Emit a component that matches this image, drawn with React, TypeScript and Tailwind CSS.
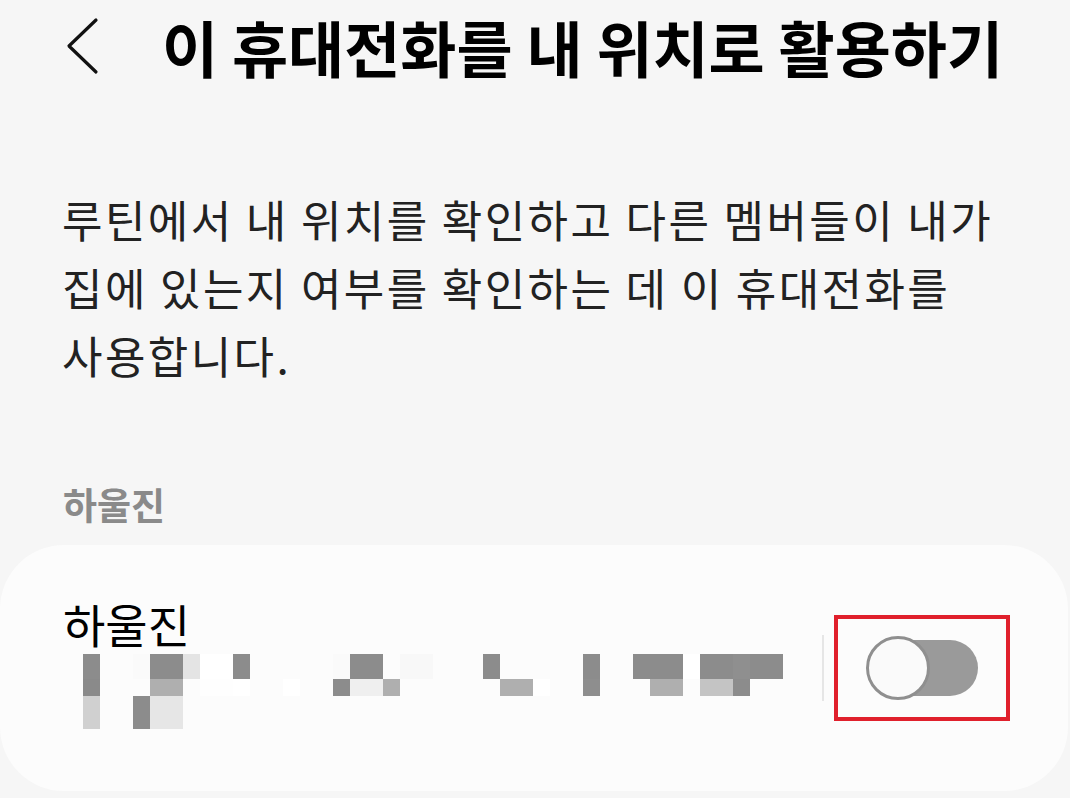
import React from "react";

const font = { fontFamily: '"Noto Sans CJK KR", "Noto Sans", sans-serif' };

type R = [number, number, string];
const row1: R[] = [
  [0, 17, "#8c8c8c"], [50, 17, "#fafafa"], [67, 33, "#8c8c8c"], [100, 17, "#e4e4e4"], [117, 33, "#ffffff"],
  [150, 17, "#8c8c8c"], [250, 17, "#fafafa"], [267, 33, "#8c8c8c"], [317, 33, "#f8f8f8"], [400, 17, "#8c8c8c"],
  [500, 17, "#8c8c8c"], [550, 50, "#8c8c8c"], [600, 17, "#ffffff"], [617, 33, "#8c8c8c"], [650, 17, "#8f8f8f"],
  [667, 33, "#8c8c8c"],
];
const row2: R[] = [
  [0, 17, "#8a8a8a"], [67, 33, "#afafaf"], [117, 33, "#fefefe"], [150, 17, "#ffffff"], [200, 17, "#ffffff"],
  [250, 17, "#8c8c8c"], [267, 33, "#efefef"], [300, 17, "#afafaf"], [417, 33, "#afafaf"], [450, 17, "#ffffff"],
  [500, 17, "#8e8e8e"], [567, 33, "#afafaf"], [617, 33, "#c4c4c4"], [650, 17, "#8c8c8c"],
];
const row3: R[] = [[0, 17, "#d0d0d0"], [50, 17, "#8c8c8c"], [67, 33, "#e6e6e6"]];

function Mosaic() {
  return (
    <svg width="700" height="75" viewBox="0 0 700 75" className="block">
      {row1.map(([x, w, c], i) => <rect key={"a" + i} x={x} y={0} width={w} height={25} fill={c} />)}
      {row2.map(([x, w, c], i) => <rect key={"b" + i} x={x} y={25} width={w} height={17} fill={c} />)}
      {row3.map(([x, w, c], i) => <rect key={"c" + i} x={x} y={42} width={w} height={33} fill={c} />)}
    </svg>
  );
}

export default function App() {
  return (
    <div className="w-[1070px] h-[798px] overflow-hidden bg-[#f6f6f6] text-black" style={font}>
      {/* header */}
      <div className="flex items-center h-[92px] pl-[66px]">
        <svg width="34" height="58" viewBox="0 0 34 58" className="shrink-0">
          <path d="M30 3 L3 29 L30 55" fill="none" stroke="#111" strokeWidth="3.2" strokeLinecap="round" strokeLinejoin="round" />
        </svg>
        <h1 className="ml-[62px] text-[61px] font-bold leading-none whitespace-nowrap">이 휴대전화를 내 위치로 활용하기</h1>
      </div>

      {/* description */}
      <p className="mt-[93px] pl-[62px] text-[44px] tracking-[2.4px] leading-[68px] text-[#222] whitespace-nowrap">
        루틴에서 내 위치를 확인하고 다른 멤버들이 내가
        <br />
        집에 있는지 여부를 확인하는 데 이 휴대전화를
        <br />
        사용합니다.
      </p>

      {/* section label */}
      <div className="mt-[97px] pl-[63px] text-[37px] font-bold leading-none text-[#8a8a8a]">하울진</div>

      {/* card */}
      <div className="mt-[22px] mr-[2px] h-[246px] rounded-[64px] bg-[#fcfcfc] flex items-center">
        <div className="flex-1 pl-[63px] pb-[8px]">
          <div className="text-[46px] leading-none">하울진</div>
          <div className="mt-[8px] pl-[20px]">
            <Mosaic />
          </div>
        </div>
        <div className="w-[2px] h-[66px] bg-[#e6e6e6] mr-[10px]" />
        <div className="mr-[58px] w-[176px] h-[106px] border-[4px] border-[#e0202c] flex items-center justify-center">
          <div className="relative w-[112px] h-[64px]">
            <div className="absolute left-[8px] right-0 top-[4px] h-[56px] rounded-full bg-[#9a9a9a]" />
            <div className="absolute left-0 top-0 w-[64px] h-[64px] rounded-full bg-[#fafafa] border-[3px] border-[#8f8f8f]" />
          </div>
        </div>
      </div>
    </div>
  );
}
